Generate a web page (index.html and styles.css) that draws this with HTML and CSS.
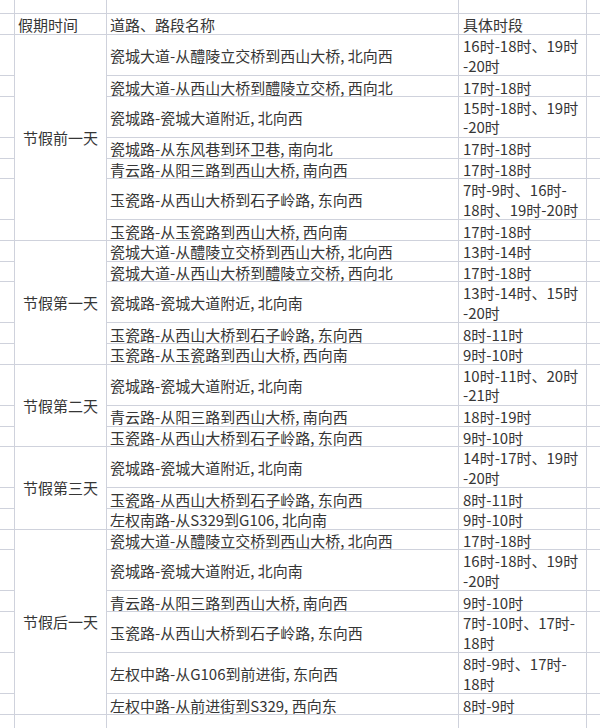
FILE: index.html
```html
<!DOCTYPE html>
<html lang="zh-CN">
<head>
<meta charset="utf-8">
<title>节假日交通管制时段</title>
<link rel="stylesheet" href="styles.css">
</head>
<body>
<div class="sheet">
  <div class="c edge"></div><div class="c edge"></div><div class="c edge"></div><div class="c edge"></div><div class="c edge"></div>

  <div class="c g"></div><div class="c hd a">假期时间</div><div class="c hd b">道路、路段名称</div><div class="c hd t">具体时段</div><div class="c g"></div>

  <div class="c g"></div><div class="c day s7">节假前一天</div><div class="c b h2">瓷城大道-从醴陵立交桥到西山大桥, 北向西</div><div class="c t h2">16时-18时、19时<br>-20时</div><div class="c g"></div>
  <div class="c g"></div><div class="c b h1">瓷城大道-从西山大桥到醴陵立交桥, 西向北</div><div class="c t h1">17时-18时</div><div class="c g"></div>
  <div class="c g"></div><div class="c b h2">瓷城路-瓷城大道附近, 北向西</div><div class="c t h2">15时-18时、19时<br>-20时</div><div class="c g"></div>
  <div class="c g"></div><div class="c b h1">瓷城路-从东风巷到环卫巷, 南向北</div><div class="c t h1">17时-18时</div><div class="c g"></div>
  <div class="c g"></div><div class="c b h1">青云路-从阳三路到西山大桥, 南向西</div><div class="c t h1">17时-18时</div><div class="c g"></div>
  <div class="c g"></div><div class="c b h2">玉瓷路-从西山大桥到石子岭路, 东向西</div><div class="c t h2">7时-9时、16时-<br>18时、19时-20时</div><div class="c g"></div>
  <div class="c g"></div><div class="c b h1">玉瓷路-从玉瓷路到西山大桥, 西向南</div><div class="c t h1">17时-18时</div><div class="c g"></div>

  <div class="c g"></div><div class="c day s5">节假第一天</div><div class="c b h1">瓷城大道-从醴陵立交桥到西山大桥, 北向西</div><div class="c t h1">13时-14时</div><div class="c g"></div>
  <div class="c g"></div><div class="c b h1">瓷城大道-从西山大桥到醴陵立交桥, 西向北</div><div class="c t h1">17时-18时</div><div class="c g"></div>
  <div class="c g"></div><div class="c b h2">瓷城路-瓷城大道附近, 北向南</div><div class="c t h2">13时-14时、15时<br>-20时</div><div class="c g"></div>
  <div class="c g"></div><div class="c b h1">玉瓷路-从西山大桥到石子岭路, 东向西</div><div class="c t h1">8时-11时</div><div class="c g"></div>
  <div class="c g"></div><div class="c b h1">玉瓷路-从玉瓷路到西山大桥, 西向南</div><div class="c t h1">9时-10时</div><div class="c g"></div>

  <div class="c g"></div><div class="c day s3">节假第二天</div><div class="c b h2">瓷城路-瓷城大道附近, 北向南</div><div class="c t h2">10时-11时、20时<br>-21时</div><div class="c g"></div>
  <div class="c g"></div><div class="c b h1">青云路-从阳三路到西山大桥, 南向西</div><div class="c t h1">18时-19时</div><div class="c g"></div>
  <div class="c g"></div><div class="c b h1">玉瓷路-从西山大桥到石子岭路, 东向西</div><div class="c t h1">9时-10时</div><div class="c g"></div>

  <div class="c g"></div><div class="c day s3">节假第三天</div><div class="c b h2">瓷城路-瓷城大道附近, 北向南</div><div class="c t h2">14时-17时、19时<br>-20时</div><div class="c g"></div>
  <div class="c g"></div><div class="c b h1">玉瓷路-从西山大桥到石子岭路, 东向西</div><div class="c t h1">8时-11时</div><div class="c g"></div>
  <div class="c g"></div><div class="c b h1">左权南路-从S329到G106, 北向南</div><div class="c t h1">9时-10时</div><div class="c g"></div>

  <div class="c g"></div><div class="c day s6">节假后一天</div><div class="c b h1">瓷城大道-从醴陵立交桥到西山大桥, 北向西</div><div class="c t h1">17时-18时</div><div class="c g"></div>
  <div class="c g"></div><div class="c b h2">瓷城路-瓷城大道附近, 北向南</div><div class="c t h2">16时-18时、19时<br>-20时</div><div class="c g"></div>
  <div class="c g"></div><div class="c b h1">青云路-从阳三路到西山大桥, 南向西</div><div class="c t h1">9时-10时</div><div class="c g"></div>
  <div class="c g"></div><div class="c b h2">玉瓷路-从西山大桥到石子岭路, 东向西</div><div class="c t h2">7时-10时、17时-<br>18时</div><div class="c g"></div>
  <div class="c g"></div><div class="c b h2">左权中路-从G106到前进街, 东向西</div><div class="c t h2">8时-9时、17时-<br>18时</div><div class="c g"></div>
  <div class="c g"></div><div class="c b h1">左权中路-从前进街到S329, 西向东</div><div class="c t h1">8时-9时</div><div class="c g"></div>

  <div class="c edge"></div><div class="c edge"></div><div class="c edge"></div><div class="c edge"></div><div class="c edge"></div>
</div>
</body>
</html>
```
FILE: styles.css
```css
html, body {
  margin: 0;
  padding: 0;
  background: #ffffff;
}

.sheet {
  display: grid;
  grid-template-columns: 14px 91px 351px 127px 13px;
  gap: 1px;
  background: #cfd2dc;
  width: 600px;
  height: 728px;
  font-family: "Noto Sans CJK SC", "Noto Sans", sans-serif;
  font-size: 15px;
  line-height: 20px;
  color: #363636;
}

.c {
  background: #ffffff;
  box-sizing: border-box;
  white-space: nowrap;
}

.edge {
  height: 13px;
}

.hd {
  height: 20px;
  display: flex;
  align-items: center;
  padding-top: 1px;
}

.a { padding-left: 3px; }
.b { padding-left: 3px; }
.t { padding-left: 4px; }

.h1, .h2 {
  display: flex;
  align-items: center;
}

.h1 {
  height: 19.6px;
  padding-top: 2px;
  line-height: 17px;
}

.h2 {
  height: 40.2px;
  padding-top: 1px;
  line-height: 19.6px;
}

.day {
  display: flex;
  align-items: center;
  justify-content: center;
  padding-top: 1px;
}
.s7 { grid-row: span 7; }
.s5 { grid-row: span 5; }
.s3 { grid-row: span 3; }
.s6 { grid-row: span 6; }
```
